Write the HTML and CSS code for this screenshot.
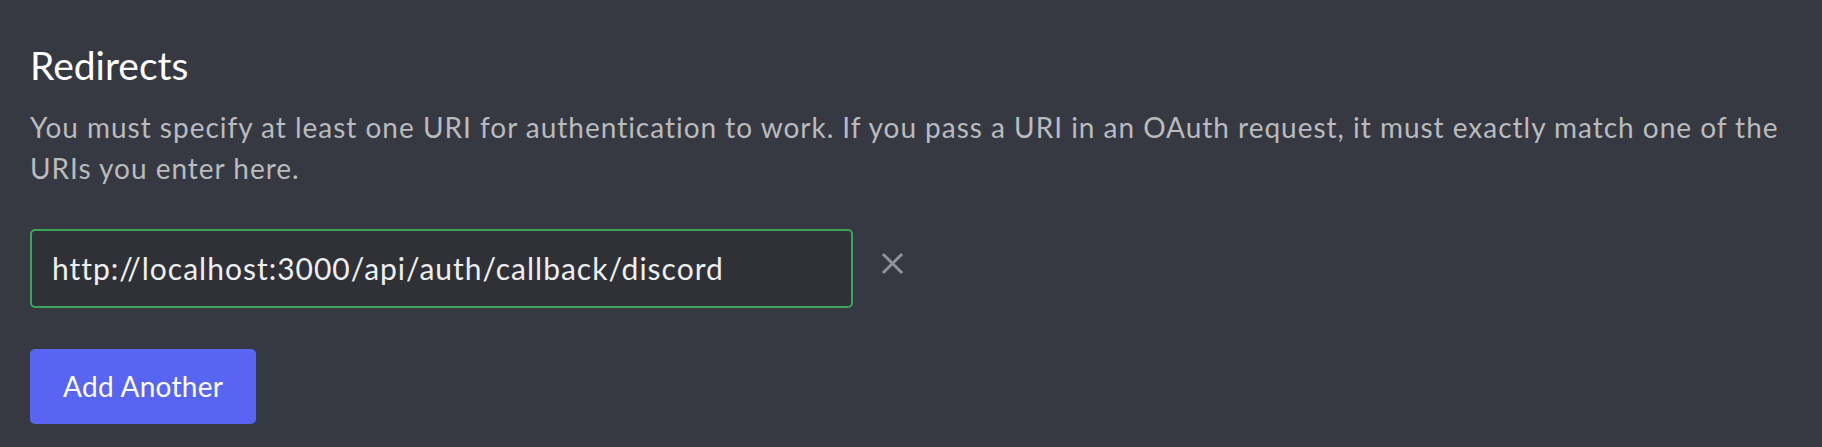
FILE: index.html
```html
<!DOCTYPE html>
<html lang="en">
<head>
  <meta charset="UTF-8" />
  <meta name="viewport" content="width=device-width, initial-scale=1.0"/>
  <title>Redirects</title>
  <link rel="stylesheet" href="styles.css">
</head>
<body>

  <div class="section">
    <h2 class="title">Redirects</h2>
    <p class="description">You must specify at least one URI for authentication to work. If you pass a URI in an OAuth request, it must exactly match one of the URIs you enter here.</p>

    <!-- Redirect list -->
    <div class="redirect-row">
      <input class="redirect-input" type="text" value="http://localhost:3000/api/auth/callback/discord">
      <button class="remove-btn" type="button" aria-label="Remove">
        <svg width="24" height="24" viewBox="0 0 24 24">
          <path d="M2 2 L22 22 M22 2 L2 22" stroke="currentColor" stroke-width="3" fill="none"/>
        </svg>
      </button>
    </div>

    <button class="add-btn" type="button">Add Another</button>
  </div>

</body>
</html>
```

FILE: styles.css
```css
body {
  margin: 0;
  padding: 0;
  background-color: #363942;
  font-family: 'Lato', 'Noto Sans', sans-serif;
}

.section {
  padding: 42px 30px 23px 30px;
}

.title {
  margin: 0;
  font-size: 39px;
  font-weight: 400;
  line-height: 1.2;
  color: #ffffff;
}

.description {
  margin: 18px 0 0 0;
  max-width: 1760px;
  font-size: 28px;
  line-height: 41px;
  letter-spacing: 0.98px;
  color: #b9bbbe;
}

.redirect-row {
  display: flex;
  align-items: center;
  gap: 28px;
  margin-top: 40px;
}

.redirect-input {
  box-sizing: border-box;
  width: 823px;
  height: 79px;
  padding: 0 20px;
  border: 2px solid #3ba55c;
  border-radius: 5px;
  background-color: #2f3136;
  color: #eeeff1;
  font-family: 'Lato', 'Noto Sans', sans-serif;
  font-size: 30px;
  letter-spacing: 1px;
  outline: none;
}

.remove-btn {
  display: flex;
  padding: 0;
  margin-top: -9px;
  border: none;
  background: none;
  color: #8f9297;
  cursor: pointer;
}

.remove-btn svg {
  width: 23px;
  height: 23px;
}

.add-btn {
  display: block;
  height: 75px;
  margin-top: 41px;
  padding: 0 33px;
  border: none;
  border-radius: 5px;
  background-color: #5865f2;
  color: #ffffff;
  font-family: 'Lato', 'Noto Sans', sans-serif;
  font-size: 28px;
  letter-spacing: 0.3px;
  cursor: pointer;
}

.add-btn:hover {
  background-color: #4752c4;
}
```
